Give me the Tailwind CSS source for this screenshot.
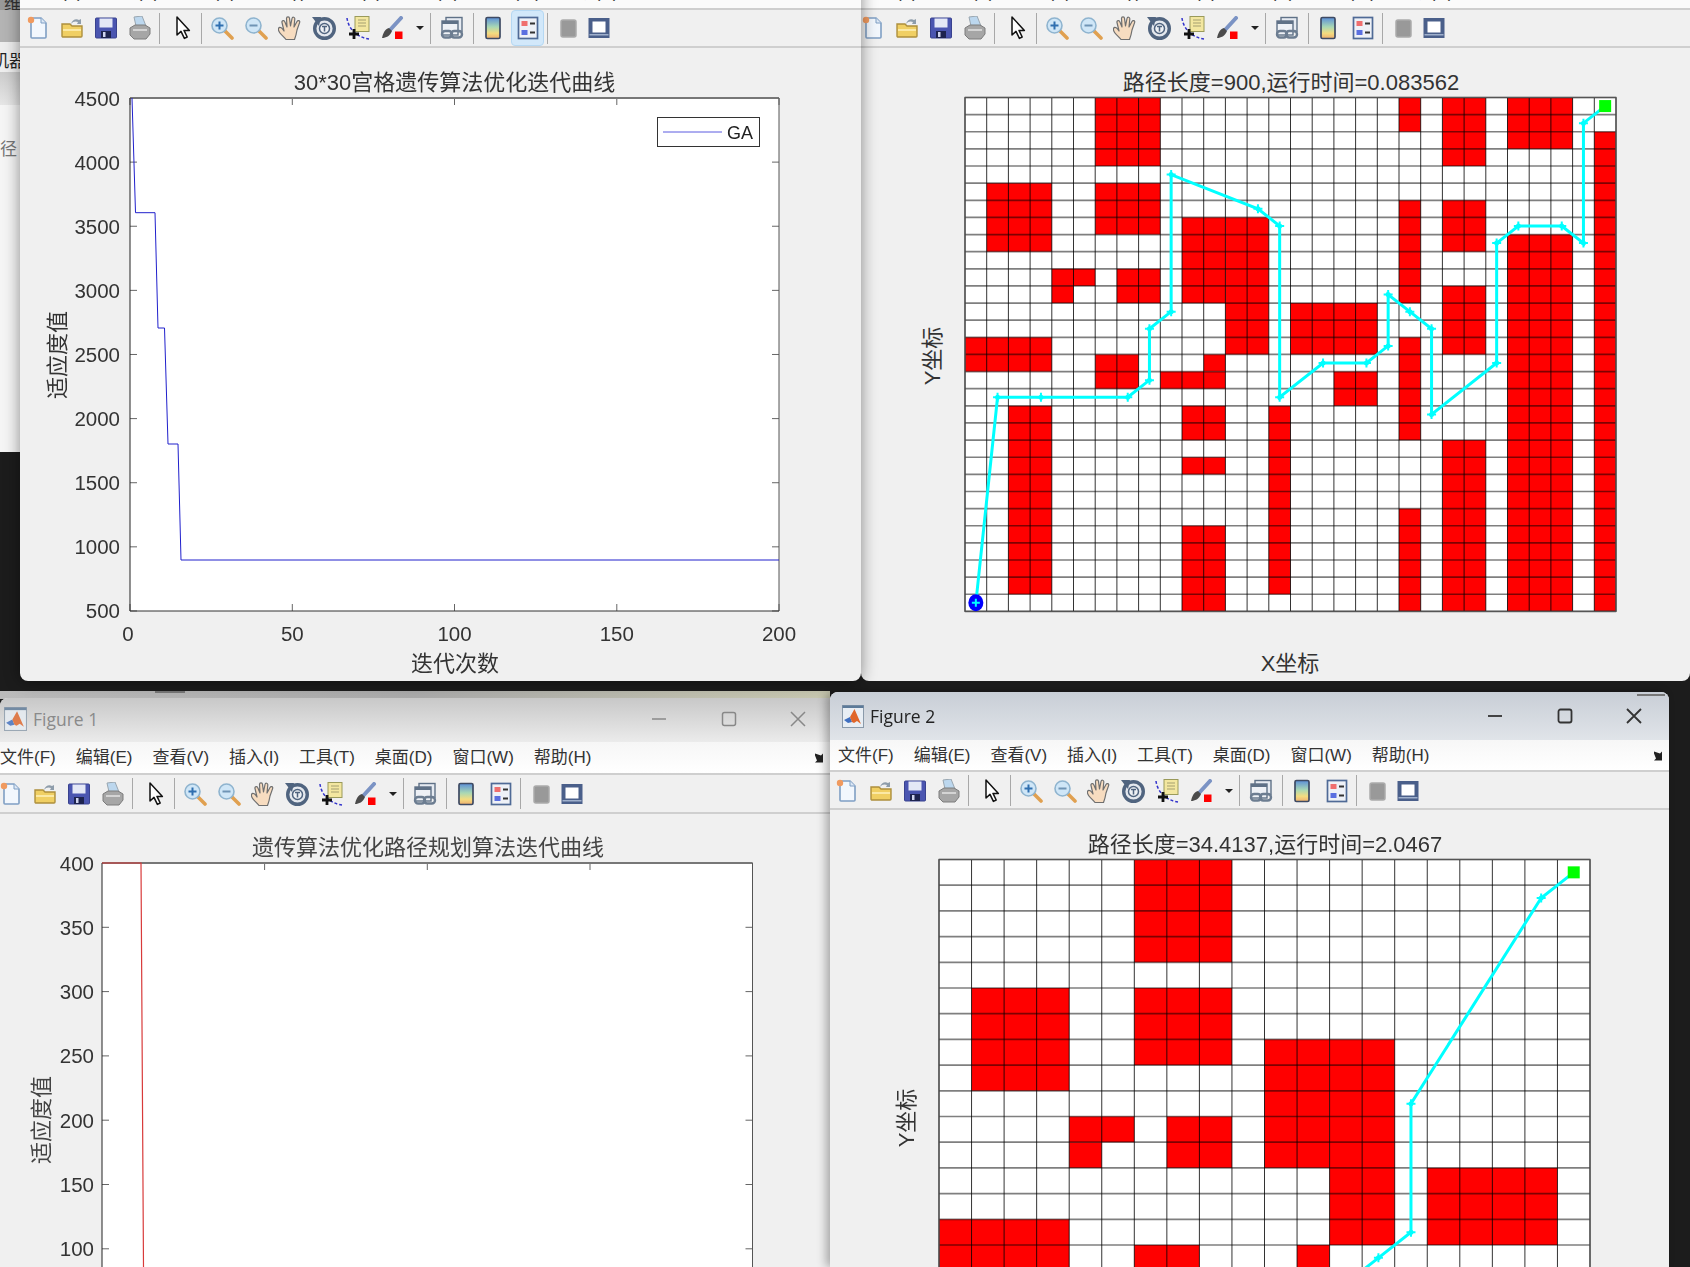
<!DOCTYPE html>
<html lang="zh">
<head>
    <meta charset="UTF-8">
    <title>MATLAB Figures</title>
    <script src="https://cdn.jsdelivr.net/npm/@tailwindcss/browser@4"></script>
</head>
<body class="bg-[#1c1c1c] overflow-hidden">
<!-- shared toolbar icons -->
<svg class="absolute w-0 h-0">
    <defs>
        <linearGradient id="cb" x1="0" y1="0" x2="0" y2="1">
            <stop offset="0" stop-color="#5b8fd8"/><stop offset=".45" stop-color="#a9d8b4"/>
            <stop offset=".75" stop-color="#f3dc80"/><stop offset="1" stop-color="#efb070"/>
        </linearGradient>
        <symbol id="i-new" viewBox="0 0 24 24">
            <path d="M5 2h10l5 5v14a1 1 0 0 1-1 1H6a1 1 0 0 1-1-1z" fill="#f2f7fd" stroke="#7f9fc4" stroke-width="1.6"/>
            <path d="M15 2v5h5" fill="#dde8f5" stroke="#7f9fc4"/>
            <circle cx="5" cy="4" r="3.2" fill="#f09a5f"/>
        </symbol>
        <symbol id="i-open" viewBox="0 0 24 24">
            <path d="M2 8h8l2 2h10v10a1 1 0 0 1-1 1H3a1 1 0 0 1-1-1z" fill="#f0cf63" stroke="#ad8f3d" stroke-width="1.4"/>
            <path d="M3 14h18" stroke="#fbe9a5" stroke-width="2"/>
            <path d="M11 8c1-4 5-6 8-4l2-1v5h-4l1-2c-2-1-5-1-7 2" fill="#8e9dab"/>
        </symbol>
        <symbol id="i-save" viewBox="0 0 24 24">
            <rect x="1.5" y="2" width="21" height="20" rx="1" fill="#4a55b0" stroke="#39428f"/>
            <rect x="5.5" y="2.5" width="13" height="9" fill="#e4e8f6"/>
            <rect x="7" y="15" width="10" height="7" fill="#1d234f"/>
            <rect x="9" y="16" width="2.5" height="5" fill="#cfd4ee"/>
        </symbol>
        <symbol id="i-print" viewBox="0 0 24 24">
            <path d="M6 1l8-1 4 10H8z" fill="#bcd7ee" stroke="#99a6b0"/>
            <path d="M2 12l5-3h10l5 3v6l-4 5H6l-4-4z" fill="#a6a6a6" stroke="#7c7c7c"/>
            <path d="M5 13h14v2H5z" fill="#d4d4d4"/>
        </symbol>
        <symbol id="i-arrow" viewBox="0 0 24 24">
            <path d="M6 1v18l4-3.6 3.4 7 2.8-1.4-3.200-6.600h5.400z" fill="#fff" stroke="#111" stroke-width="1.5" stroke-linejoin="round"/>
        </symbol>
        <symbol id="i-zoomin" viewBox="0 0 24 24">
            <path d="M15 15l7 7" stroke="#e0a050" stroke-width="3.6" stroke-linecap="round"/>
            <circle cx="9.5" cy="9.5" r="7.5" fill="#cfe6f7" stroke="#8fb4cf" stroke-width="1.6"/>
            <path d="M9.5 5.5v8M5.500 9.500h8" stroke="#2f6fb0" stroke-width="2"/>
        </symbol>
        <symbol id="i-zoomout" viewBox="0 0 24 24">
            <path d="M15 15l7 7" stroke="#e0a050" stroke-width="3.6" stroke-linecap="round"/>
            <circle cx="9.5" cy="9.5" r="7.5" fill="#cfe6f7" stroke="#8fb4cf" stroke-width="1.6"/>
            <path d="M5.500 9.500h8" stroke="#6f94b5" stroke-width="2"/>
        </symbol>
        <symbol id="i-pan" viewBox="0 0 24 24">
            <path d="M8 23.500c-2-3-7-6-7.500-9.500s2.500-3 4-1l1.500 2L4 6.500c-.5-2 2.200-2.800 2.800-.8L9 11 8.500 2.500c0-2 2.800-2.200 3-.2L12.500 10l1.500-7.500c.4-2 3-1.500 2.800.5L16 11l3-5.500c1-1.800 3.400-.8 2.600 1.100L19 14c-.5 3-1 6-2.500 9.500z" fill="#f7dcc0" stroke="#6f6f6f" stroke-width="1.200" stroke-linejoin="round"/>
        </symbol>
        <symbol id="i-rotate" viewBox="0 0 24 24">
            <circle cx="12.500" cy="12.500" r="9.800" fill="#e4e8ee" stroke="#50647f" stroke-width="3.400"/>
            <circle cx="12.500" cy="12.500" r="5" fill="#eef1f5" stroke="#50647f" stroke-width="1.500"/>
            <path d="M10 10.500h5M12.500 10.500v5" stroke="#50647f" stroke-width="1.500"/>
            <path d="M0 1h9l-2 9z" fill="#50647f"/>
        </symbol>
        <symbol id="i-data" viewBox="0 0 24 24">
            <rect x="9" y="0.500" width="14" height="15" fill="#f3e7a0" stroke="#9a9a5a"/>
            <path d="M12 4h8M12 7h8M12 10h8" stroke="#a5a070" stroke-width="1.200"/>
            <path d="M1 2c1 9 8 19 22 21" fill="none" stroke="#3333cc" stroke-width="1.500" stroke-dasharray="3 2"/>
            <path d="M8 13v10M3 18h10" stroke="#111" stroke-width="2.800"/>
        </symbol>
        <symbol id="i-brush" viewBox="0 0 24 24">
            <path d="M21 2L10 14" stroke="#7b93c4" stroke-width="4" stroke-linecap="round"/>
            <path d="M9 12c-4 1-6 5-7 10 4 0 8-2 10-7z" fill="#4b4b4b"/>
            <rect x="15" y="15.500" width="7.500" height="7.500" fill="#f00"/>
        </symbol>
        <symbol id="i-link" viewBox="0 0 24 24">
            <rect x="6" y="1.500" width="16" height="14" fill="#e6ebf2" stroke="#5f7187" stroke-width="1.400"/>
            <rect x="2" y="5" width="16" height="14" fill="#eef1f6" stroke="#5f7187" stroke-width="1.400"/>
            <path d="M2 5h16v3H2z" fill="#5f7187"/>
            <rect x="2" y="15" width="10" height="6.500" rx="3.200" fill="none" stroke="#6c7d91" stroke-width="2.400"/>
            <rect x="11" y="15" width="11" height="6.500" rx="3.200" fill="none" stroke="#6c7d91" stroke-width="2.400"/>
        </symbol>
        <symbol id="i-colorbar" viewBox="0 0 24 24">
            <rect x="5" y="1.500" width="14" height="21" rx="1.500" fill="url(#cb)" stroke="#3e4a63" stroke-width="1.700"/>
        </symbol>
        <symbol id="i-legend" viewBox="0 0 24 24">
            <rect x="2.500" y="1.500" width="19" height="21" fill="#eef1f7" stroke="#4f6a96" stroke-width="1.700"/>
            <rect x="5.500" y="5" width="6" height="5" fill="#ef6f6f"/>
            <rect x="5.500" y="14" width="6" height="5" fill="#5a6fe0"/>
            <path d="M14 7.500h5M14 16.500h5" stroke="#333" stroke-width="1.800"/>
        </symbol>
        <symbol id="i-gray" viewBox="0 0 24 24">
            <rect x="5" y="4" width="15" height="17" rx="2" fill="#999" stroke="#aaa" stroke-width="1.500"/>
        </symbol>
        <symbol id="i-plot" viewBox="0 0 24 24">
            <rect x="1.500" y="2" width="21" height="20" fill="#4a5f8a"/>
            <rect x="5.500" y="5.500" width="13" height="11" fill="#fff"/>
            <rect x="2.500" y="18" width="19" height="1.500" fill="#9fb0cc"/>
        </symbol>
        <symbol id="i-matlab" viewBox="0 0 22 23">
            <rect x="0.500" y="0.500" width="21" height="22" fill="#e8eef4" stroke="#8a9aaa"/>
            <rect x="0.500" y="0.500" width="21" height="2.500" fill="#5c7a99"/>
            <path d="M2 15l6-3 2 5-4 1z" fill="#3f6fc0"/>
            <path d="M8 12l4.500-8 6.500 15-4-3-3 2-2-1z" fill="#e0662a"/>
        </symbol>
        <symbol id="i-corner" viewBox="0 0 12 12">
            <path d="M1 1.500l6 2 2-2v9H1l2-2-2-5z" fill="#222"/>
        </symbol>
    </defs>
</svg>

<main class="relative w-[1690px] h-[1267px] overflow-hidden blur-[0.4px] font-['Liberation_Sans','Noto_Sans_CJK_SC',sans-serif] text-[#333]">

    <!-- window peeking out behind the top left figure -->
    <div class="absolute left-0 top-0 w-5 h-[452px] overflow-hidden flex flex-col bg-[#f5f5f5] text-[17px]">
        <div class="h-[10px] bg-[#999] leading-[10px] text-[#333] pl-1 overflow-hidden">维</div>
        <div class="h-8 bg-[#b4b4b4]"></div>
        <div class="h-[30px] bg-[#eee] whitespace-nowrap -ml-2 leading-[40px] text-[#222]">机器</div>
        <div class="h-[33px] bg-gradient-to-b from-[#ccc] to-[#e6e6e6]"></div>
        <div class="whitespace-nowrap -ml-[17px] mt-[35px] leading-5 text-[#777]">路径</div>
    </div>

    <!-- window peeking out behind Figure 1 -->
    <div class="absolute left-0 top-[691px] w-[830px] h-2 bg-gradient-to-r from-[#bbb] via-[#aaa] to-[#c8c8b0]">
        <div class="ml-[155px] w-[30px] h-[2px] bg-[#777]"></div>
    </div>

    <!-- top right figure -->
    <section class="absolute left-[861px] top-[-22px] w-[829px] h-[703px] flex flex-col bg-[#f0f0f0] rounded-b-lg overflow-hidden">
        <div data-menu class="h-8 shrink-0 bg-[#fbfbfb] flex items-center gap-5 text-[17px] pl-[1px] border-b-2 border-[#cfcfcf]"></div>
        <div data-toolbar class="h-[38px] shrink-0 flex items-center -ml-[5px] border-b-2 border-[#cfcfcf]"></div>
        <svg id="plotB" class="block w-[829px] h-[633px]" viewBox="861 48 829 633"></svg>
    </section>

    <!-- top left figure -->
    <section class="absolute left-5 top-[-22px] w-[841px] h-[703px] flex flex-col bg-[#f0f0f0] rounded-b-lg overflow-hidden shadow-[0_0_16px_rgba(0,0,0,0.45)]">
        <div data-menu class="h-8 shrink-0 bg-[#fbfbfb] flex items-center gap-5 text-[17px] pl-[7px] border-b-2 border-[#cfcfcf]"></div>
        <div data-toolbar data-active="legend" class="h-[38px] shrink-0 flex items-center pl-[1px] border-b-2 border-[#cfcfcf]"></div>
        <svg id="plotA" class="block w-[841px] h-[633px]" viewBox="20 48 841 633"></svg>
    </section>

    <!-- Figure 1 (inactive) -->
    <section class="absolute left-0 top-[698px] w-[840px] h-[569px] flex flex-col bg-[#f0f0f0] rounded-t-lg overflow-hidden">
        <header class="h-11 shrink-0 flex items-center bg-gradient-to-b from-[#c8c8c8] to-[#ebebeb] pb-[2px]">
            <svg class="w-[23px] h-6 ml-[4px] opacity-80"><use href="#i-matlab"/></svg>
            <span class="ml-[6px] text-[17.500px] font-['Open_Sans',sans-serif] text-[#8a8a8a]">Figure 1</span>
            <div class="ml-[553px] w-[155px] flex items-center justify-between text-[#888]">
                <svg class="w-4 h-4" viewBox="0 0 16 16"><path d="M1 8h14" stroke="currentColor" stroke-width="1.500"/></svg>
                <svg class="w-4 h-4" viewBox="0 0 16 16"><rect x="1.500" y="1.500" width="13" height="13" rx="2" fill="none" stroke="currentColor" stroke-width="1.500"/></svg>
                <svg class="w-4 h-4" viewBox="0 0 16 16"><path d="M1 1l14 14M15 1L1 15" stroke="currentColor" stroke-width="1.500"/></svg>
            </div>
        </header>
        <div data-menu data-corner="ml-auto mr-[14px]" class="h-[33px] shrink-0 bg-gradient-to-b from-[#f6f6f6] to-white flex items-center gap-5 text-[17px] pt-px border-b-2 border-[#cfcfcf]"></div>
        <div data-toolbar class="h-[39px] shrink-0 flex items-center -ml-[6px] border-b-2 border-[#cfcfcf]"></div>
        <svg id="plotC" class="block w-[840px] h-[453px]" viewBox="0 814 840 453"></svg>
    </section>

    <!-- Figure 2 (active) -->
    <section class="absolute left-[830px] top-[692px] w-[839px] h-[575px] flex flex-col bg-[#f0f0f0] rounded-t-lg overflow-hidden shadow-[-4px_0_10px_rgba(0,0,0,0.3)]">
        <header class="relative h-12 shrink-0 flex items-center bg-gradient-to-b from-[#c8ced6] to-[#e0e4e9]">
            <div class="absolute right-1 top-[2px] w-7 h-[2px] bg-[#777]"></div>
            <svg class="w-[22px] h-[23px] ml-3"><use href="#i-matlab"/></svg>
            <span class="ml-[6px] text-[17.500px] font-['Open_Sans',sans-serif] text-[#222]">Figure 2</span>
            <div class="ml-[552px] w-[155px] flex items-center justify-between text-[#333]">
                <svg class="w-4 h-4" viewBox="0 0 16 16"><path d="M1 8h14" stroke="currentColor" stroke-width="1.800"/></svg>
                <svg class="w-4 h-4" viewBox="0 0 16 16"><rect x="1.500" y="1.500" width="13" height="13" rx="2" fill="none" stroke="currentColor" stroke-width="1.800"/></svg>
                <svg class="w-4 h-4" viewBox="0 0 16 16"><path d="M1 1l14 14M15 1L1 15" stroke="currentColor" stroke-width="1.800"/></svg>
            </div>
        </header>
        <div data-menu data-corner="ml-auto mr-1" class="h-8 shrink-0 bg-gradient-to-b from-[#f7f7f7] to-white flex items-center gap-5 text-[17px] pl-2 pt-px border-b-2 border-[#cfcfcf]"></div>
        <div data-toolbar class="h-[38px] shrink-0 flex items-center pt-px border-b-2 border-[#cfcfcf]"></div>
        <svg id="plotD" class="block w-[839px] h-[457px]" viewBox="830 810 839 457"></svg>
    </section>
</main>

<script>
    const MENU = ["文件(F)", "编辑(E)", "查看(V)", "插入(I)", "工具(T)", "桌面(D)", "窗口(W)", "帮助(H)"];

    document.querySelectorAll("[data-menu]").forEach(el => {
        let html = MENU.map(m => `<span class="whitespace-nowrap">${m}</span>`).join("");
        if (el.dataset.corner) {
            html += `<svg class="w-3 h-3 ${el.dataset.corner}"><use href="#i-corner"/></svg>`;
        }
        el.innerHTML = html;
    });

    const icon = (id, box = "w-[34px]") =>
        `<span class="${box} h-6 shrink-0 flex justify-center"><svg class="w-6 h-6"><use href="#i-${id}"/></svg></span>`;
    const sep = (cls) => `<span class="w-px h-[31px] shrink-0 bg-[#a8a8a8] ${cls}"></span>`;

    document.querySelectorAll("[data-toolbar]").forEach(el => {
        const legend = el.dataset.active === "legend"
            ? `<span class="w-[33px] h-[36px] ml-[2px] shrink-0 flex items-center justify-center bg-[#d2e8fa] border border-[#b5d8f3] rounded-sm"><svg class="w-6 h-6"><use href="#i-legend"/></svg></span>`
            : `<span class="w-[33px] h-[36px] ml-[2px] shrink-0 flex items-center justify-center"><svg class="w-6 h-6"><use href="#i-legend"/></svg></span>`;
        el.innerHTML =
            ["new", "open", "save", "print"].map(i => icon(i)).join("") +
            sep("ml-[2px] mr-[6px]") + icon("arrow") + sep("ml-px mr-[3px]") +
            ["zoomin", "zoomout", "pan", "rotate", "data", "brush"].map(i => icon(i)).join("") +
            `<svg class="w-2 h-1 ml-[7px] shrink-0" viewBox="0 0 8 4"><path d="M0 0h8L4 4z" fill="#222"/></svg>` +
            sep("ml-[6px] mr-1") + icon("link") + sep("ml-1 mr-[3px]") +
            icon("colorbar", "w-8") + legend + sep("ml-[3px] mr-[5px]") +
            icon("gray", "w-[30px]") + icon("plot", "w-[32px]");
    });

    const text = (x, y, s, opts = {}) => {
        const size = opts.size || 20.500;
        const rot = opts.rotate ? ` transform="rotate(-90 ${x} ${y})"` : "";
        return `<text x="${x}" y="${y}" font-size="${size}" fill="${opts.fill || "#333"}" text-anchor="${opts.anchor || "middle"}" dominant-baseline="central"${rot}>${s}</text>`;
    };
    const line = (x1, y1, x2, y2, color, w = 1) =>
        `<line x1="${x1}" y1="${y1}" x2="${x2}" y2="${y2}" stroke="${color}" stroke-width="${w}"/>`;

    // Line chart axes. xs/ys are lists of [position, label]
    function axes(o) {
        let s = `<rect x="${o.l}" y="${o.t}" width="${o.r - o.l}" height="${o.b - o.t}" fill="#fff"/>`;
        s += o.xs.map(([p, lb]) => line(p, o.t, p, o.t + 7, "#666") + line(p, o.b, p, o.b - 7, "#666") +
            text(p === o.l ? p - 2 : p, o.b + 22, lb)).join("");
        s += o.ys.map(([p, lb]) => line(o.l, p, o.l + 7, p, "#666") + line(o.r, p, o.r - 7, p, "#666") +
            text(o.l - o.gap, p, lb, { anchor: "end" })).join("");
        s += line(o.l, o.t, o.r, o.t, "#777", 2) + line(o.l, o.t, o.l, o.b, "#222") +
            line(o.r, o.t, o.r, o.b, "#555") + line(o.l, o.b, o.r, o.b, "#333");
        return s;
    }

    const yTicks = (top, step, from, dec, n) =>
        Array.from({ length: n }, (_, i) => [top + step * i, String(from - dec * i)]);

    // top left: 30*30 convergence curve
    {
        const a = { l: 130, r: 779, t: 98, b: 611, gap: 10,
            xs: [[130, "0"], [292.3, "50"], [454.5, "100"], [616.8, "150"], [779, "200"]],
            ys: yTicks(98, 64.12, 4500, 500, 9) };
        let s = text(454.500, 82, "30*30宫格遗传算法优化迭代曲线", { size: 22 });
        s += axes(a);
        s += `<polyline fill="none" stroke="#2020cc" points="132,98 135.500,212.700 155,212.700 158,328 164.500,328 168,444 178,444 181,560 779,560"/>`;
        s += `<rect x="657.500" y="117.500" width="102" height="29" fill="#fff" stroke="#333"/>`;
        s += line(663, 132, 722, 132, "#5a5ae0") + text(727, 133, "GA", { size: 18, anchor: "start", fill: "#222" });
        s += text(455, 663, "迭代次数", { size: 22 }) + text(57, 355, "适应度值", { size: 22, rotate: true });
        document.getElementById("plotA").innerHTML = s;
    }

    // Occupancy map. cells are [col from, col to, row from, row to], rows counted from the top
    function gridMap(o) {
        const cw = (o.r - o.l) / o.n, ch = o.rowH;
        const cx = c => o.l + cw * (c + 0.5), cy = r => o.t + ch * (r + 0.5);
        let s = `<rect x="${o.l}" y="${o.t}" width="${o.r - o.l}" height="${ch * o.n}" fill="#fff"/>`;
        o.cells.forEach(([c1, c2, r1, r2]) => {
            s += `<rect x="${o.l + cw * c1}" y="${o.t + ch * r1}" width="${cw * (c2 - c1 + 1)}" height="${ch * (r2 - r1 + 1)}" fill="#ff0000"/>`;
        });
        for (let i = 0; i <= o.n; i++) {
            s += line(o.l + cw * i, o.t, o.l + cw * i, o.t + ch * o.n, "rgba(0,0,0,0.8)");
            s += line(o.l, o.t + ch * i, o.r, o.t + ch * i, "rgba(0,0,0,0.5)", 1.7);
        }
        s += `<rect x="${o.l}" y="${o.t}" width="${o.r - o.l}" height="${ch * o.n}" fill="none" stroke="#555" stroke-width="1.300"/>`;
        const pts = o.path.map(([c, r]) => [cx(c), cy(r)]);
        s += `<polyline fill="none" stroke="#00ffff" stroke-width="3" points="${pts.map(p => p.join(",")).join(" ")}"/>`;
        pts.forEach(([x, y]) => {
            s += `<path d="M${x} ${y - 4.500}v9M${x - 4.500} ${y}h9" stroke="#00ffff" stroke-width="2"/><circle cx="${x}" cy="${y}" r="2.500" fill="#00ffff"/>`;
        });
        const [gc, gr] = o.path[o.path.length - 1];
        s += `<rect x="${cx(gc) - 6}" y="${cy(gr) - 6}" width="12" height="12" fill="#00ff00"/>`;
        return { svg: s, cx, cy };
    }

    // top right: 30*30 grid
    {
        const map = gridMap({ l: 965, r: 1616, t: 97.500, rowH: 17.130, n: 30,
            cells: [[6,8,0,3],[20,20,0,1],[22,23,0,3],[25,27,0,2],[29,29,2,29],[1,3,5,8],[6,8,5,7],
                [10,11,7,11],[12,13,7,14],[20,20,6,11],[22,23,6,8],[25,27,8,29],[4,5,10,10],[4,4,11,11],
                [7,8,10,11],[15,18,12,14],[22,23,11,14],[0,3,14,15],[6,7,15,16],[11,11,15,15],[9,11,16,16],
                [17,18,16,17],[20,20,14,19],[2,3,18,28],[10,11,18,19],[10,11,21,21],[10,11,25,29],[14,14,18,28],
                [20,20,24,29],[22,23,20,29]],
            path: [[0,29],[1,17],[3,17],[7,17],[8,16],[8,13],[9,12],[9,4],[13,6],[14,7],[14,17],[16,15],[18,15],
                [19,14],[19,11],[20,12],[21,13],[21,18],[24,15],[24,8],[25,7],[27,7],[28,8],[28,1],[29,0]] });
        let s = text(1291, 82, "路径长度=900,运行时间=0.083562", { size: 22 }) + map.svg;
        s += `<ellipse cx="${map.cx(0)}" cy="${map.cy(29)}" rx="7.500" ry="8.500" fill="#0000ff"/>`;
        s += `<path d="M${map.cx(0)} ${map.cy(29) - 4}v8M${map.cx(0) - 4} ${map.cy(29)}h8" stroke="#00ffff" stroke-width="2"/>`;
        s += text(1290, 663, "X坐标", { size: 22 }) + text(932, 356, "Y坐标", { size: 22, rotate: true });
        document.getElementById("plotB").innerHTML = s;
    }

    // Figure 1
    {
        const a = { l: 102, r: 752.500, t: 863, b: 1400, gap: 8,
            xs: [[264.600, ""], [427.300, ""], [590, ""]],
            ys: yTicks(863, 64.300, 400, 50, 7) };
        let s = text(428, 847, "遗传算法优化路径规划算法迭代曲线", { size: 22, fill: "#444" });
        s += axes(a);
        s += `<polyline fill="none" stroke="#d83a3a" stroke-width="1.200" points="102,863 141,863 143.500,1267"/>`;
        s += text(41, 1120, "适应度值", { size: 22, rotate: true, fill: "#444" });
        document.getElementById("plotC").innerHTML = s;
    }

    // Figure 2: 20*20 grid, runs off the bottom of the screen
    {
        const map = gridMap({ l: 939, r: 1590, t: 859.500, rowH: 25.700, n: 20,
            cells: [[6,8,0,3],[1,3,5,8],[6,8,5,7],[10,11,7,11],[12,13,7,14],[4,5,10,10],[4,4,11,11],[7,8,10,11],
                [15,18,12,14],[0,3,14,15],[6,7,15,15],[11,11,15,15]],
            path: [[12,16],[13,15],[14,14],[14,9],[18,1],[19,0]] });
        let s = text(1265, 844, "路径长度=34.4137,运行时间=2.0467", { size: 22 }) + map.svg;
        s += text(906, 1118, "Y坐标", { size: 22, rotate: true });
        document.getElementById("plotD").innerHTML = s;
    }
</script>
</body>
</html>
